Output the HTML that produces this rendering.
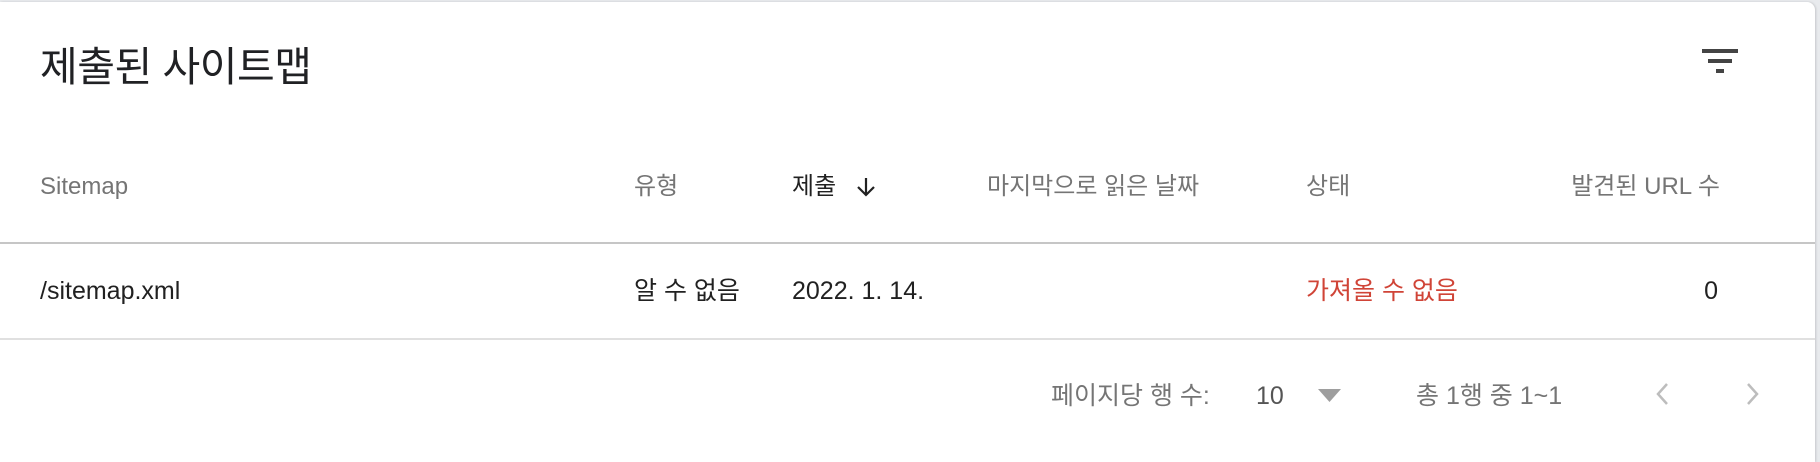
<!DOCTYPE html>
<html><head><meta charset="utf-8"><style>
html,body{margin:0;padding:0;}
body{width:1820px;height:446px;background:#e8eaed;position:relative;overflow:hidden;font-family:"Liberation Sans","Noto Sans CJK KR",sans-serif;}
.card{position:absolute;left:0;top:2px;width:1815px;height:460px;background:#fff;border-top-right-radius:8px;box-shadow:1px 0 2px rgba(0,0,0,.15);}
.t{position:absolute;white-space:nowrap;line-height:1;}
.h{font-size:24px;color:#757575;top:175px;}
.d{font-size:25px;color:#212121;top:279px;}
.f{font-size:25px;color:#757575;top:384px;}
.bar{position:absolute;background:#444;}
</style></head><body>
<div class="card"></div>
<div class="t" style="left:40px;top:47px;font-size:41px;color:#202124;letter-spacing:-0.5px">제출된 사이트맵</div>
<div class="bar" style="left:1702px;top:49px;width:36px;height:4px"></div>
<div class="bar" style="left:1708px;top:59px;width:24px;height:4px"></div>
<div class="bar" style="left:1716px;top:69px;width:8px;height:4px"></div>

<div class="t h" style="left:40px">Sitemap</div>
<div class="t h" style="left:634px">유형</div>
<div class="t h" style="left:792px;color:#212121">제출</div>
<svg style="position:absolute;left:854px;top:175px" width="24" height="24" viewBox="0 0 24 24"><path d="M12 3v17M4 12l8 8 8-8" stroke="#212121" stroke-width="2.2" fill="none"/></svg>
<div class="t h" style="left:987px">마지막으로 읽은 날짜</div>
<div class="t h" style="left:1306px">상태</div>
<div class="t h" style="right:100px">발견된 URL 수</div>
<div style="position:absolute;left:0;top:242px;width:1815px;height:2px;background:#c6c6c6"></div>

<div class="t d" style="left:40px">/sitemap.xml</div>
<div class="t d" style="left:634px">알 수 없음</div>
<div class="t d" style="left:792px">2022. 1. 14.</div>
<div class="t d" style="left:1306px;color:#d04437">가져올 수 없음</div>
<div class="t d" style="right:102px">0</div>
<div style="position:absolute;left:0;top:338px;width:1815px;height:2px;background:#e0e0e0"></div>

<div class="t f" style="left:1051px">페이지당 행 수:</div>
<div class="t f" style="left:1256px;color:#555">10</div>
<svg style="position:absolute;left:1318px;top:389px" width="23" height="13" viewBox="0 0 23 13"><path d="M0 0h23L11.5 13z" fill="#9e9e9e"/></svg>
<div class="t f" style="left:1416px">총 1행 중 1~1</div>
<svg style="position:absolute;left:1654px;top:383px" width="16" height="22" viewBox="0 0 16 22"><path d="M13 1L4 11l9 10" stroke="#bdbdbd" stroke-width="2.5" fill="none"/></svg>
<svg style="position:absolute;left:1745px;top:383px" width="16" height="22" viewBox="0 0 16 22"><path d="M3 1l9 10-9 10" stroke="#bdbdbd" stroke-width="2.5" fill="none"/></svg>
</body></html>
